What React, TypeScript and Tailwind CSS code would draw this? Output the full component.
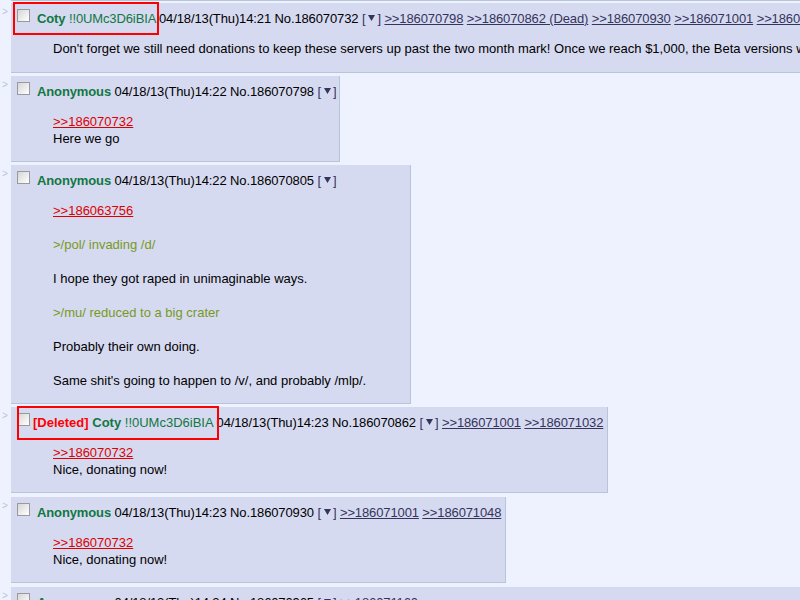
import React from "react";

const Checkbox = ({ mr = "mr-[7px]" }: { mr?: string }) => (
  <span
    className={`inline-block w-[13px] h-[13px] border border-[#9a9a9a] bg-[linear-gradient(135deg,#d6d6d6,#ffffff)] align-[1px] ${mr}`}
  />
);

const Menu = () => (
  <span className="text-[#34345C]">
    [
    <svg width="7" height="6" viewBox="0 0 7 6" className="inline-block ml-[3px] mr-[2px] align-[2px]">
      <polygon points="0,0 7,0 3.5,6" fill="#34345C" />
    </svg>
    ]
  </span>
);

const Back = ({ children }: { children: React.ReactNode }) => (
  <>
    {" "}
    <a className="text-[#34345C] underline cursor-pointer">{children}</a>
  </>
);

const Name = ({ name = "Anonymous" }: { name?: string }) => (
  <span className="font-bold text-[#117743]">{name}</span>
);

const Trip = () => <span className="text-[#117743]">!!0UMc3D6iBIA</span>;

const Quote = ({ children }: { children: React.ReactNode }) => (
  <div>
    <a className="text-[#DD0000] underline cursor-pointer">{children}</a>
  </div>
);

const Green = ({ children }: { children: React.ReactNode }) => (
  <div className="text-[#789922]">{children}</div>
);

const Blank = () => <div className="h-[17px]" />;

const Row = ({
  mt,
  postClass,
  header,
  children,
  mb = "mb-[12px]",
}: {
  mt: string;
  postClass: string;
  header: React.ReactNode;
  children: React.ReactNode;
  mb?: string;
}) => (
  <div className={`flex items-start ${mt}`}>
    <div className="ml-[2px] w-[9px] shrink-0 mt-[3px] text-[10px] leading-[12px] text-[#B7C5D9]">&gt;</div>
    <div className={`shrink-0 bg-[#D6DAF0] border-r border-b border-[#B7C5D9] p-[2px] ${postClass}`}>
      <div className="h-[22px] pt-[4px] pl-[4px] leading-[17px] whitespace-nowrap tracking-[-0.12px]">{header}</div>
      <div className={`mt-[13px] ${mb} ml-[40px] leading-[17px]`}>{children}</div>
    </div>
  </div>
);

export default function App() {
  return (
    <div className="relative w-[800px] h-[600px] overflow-hidden bg-[#EEF2FF] font-['Liberation_Sans',Arial,sans-serif] text-[13px] text-black">
      <div className="ml-[11px] h-[1px] bg-[#B7C5D9]" />

      <Row
        mt="mt-[2px]"
        postClass="w-max whitespace-nowrap"
        mb="mb-[13px]"
        header={
          <>
            <Checkbox />
            <Name name="Coty" /> <Trip /> 04/18/13(Thu)14:21 No.186070732 <Menu />
            <Back>&gt;&gt;186070798</Back>
            <Back>&gt;&gt;186070862 (Dead)</Back>
            <Back>&gt;&gt;186070930</Back>
            <Back>&gt;&gt;186071001</Back>
            <Back>&gt;&gt;186071032</Back>
          </>
        }
      >
        <div>
          Don't forget we still need donations to keep these servers up past the two month mark! Once we reach
          $1,000, the Beta versions will be released to everyone.
        </div>
      </Row>

      <Row
        mt="mt-[3px]"
        postClass="w-[329px]"
        header={
          <>
            <Checkbox />
            <Name /> 04/18/13(Thu)14:22 No.186070798 <Menu />
          </>
        }
      >
        <Quote>&gt;&gt;186070732</Quote>
        <div>Here we go</div>
      </Row>

      <Row
        mt="mt-[3px]"
        postClass="w-[400px]"
        header={
          <>
            <Checkbox />
            <Name /> 04/18/13(Thu)14:22 No.186070805 <Menu />
          </>
        }
      >
        <Quote>&gt;&gt;186063756</Quote>
        <Blank />
        <Green>&gt;/pol/ invading /d/</Green>
        <Blank />
        <div>I hope they got raped in unimaginable ways.</div>
        <Blank />
        <Green>&gt;/mu/ reduced to a big crater</Green>
        <Blank />
        <div>Probably their own doing.</div>
        <Blank />
        <div>Same shit's going to happen to /v/, and probably /mlp/.</div>
      </Row>

      <Row
        mt="mt-[3px]"
        postClass="w-[597px]"
        header={
          <>
            <Checkbox mr="mr-[3px]" />
            <span className="tracking-normal">
              <span className="font-bold text-[#FF0000]">[Deleted]</span> <Name name="Coty" /> <Trip />{" "}
            </span>
            04/18/13(Thu)14:23 No.186070862 <Menu />
            <Back>&gt;&gt;186071001</Back>
            <Back>&gt;&gt;186071032</Back>
          </>
        }
      >
        <Quote>&gt;&gt;186070732</Quote>
        <div>Nice, donating now!</div>
      </Row>

      <Row
        mt="mt-[4px]"
        postClass="w-[495px]"
        header={
          <>
            <Checkbox />
            <Name /> 04/18/13(Thu)14:23 No.186070930 <Menu />
            <Back>&gt;&gt;186071001</Back>
            <Back>&gt;&gt;186071048</Back>
          </>
        }
      >
        <Quote>&gt;&gt;186070732</Quote>
        <div>Nice, donating now!</div>
      </Row>

      <Row
        mt="mt-[4px]"
        postClass="w-[820px]"
        header={
          <>
            <Checkbox />
            <Name /> 04/18/13(Thu)14:24 No.186070965 <Menu />
            <Back>&gt;&gt;186071160</Back>
          </>
        }
      >
        <Quote>&gt;&gt;186070862</Quote>
        <div>Thanks Coty.</div>
      </Row>

      <div className="absolute left-[13px] top-[2px] w-[146px] h-[33px] border-2 border-[#FF0000]" />
      <div className="absolute left-[17px] top-[406px] w-[202px] h-[34px] border-2 border-[#FF0000]" />
    </div>
  );
}
